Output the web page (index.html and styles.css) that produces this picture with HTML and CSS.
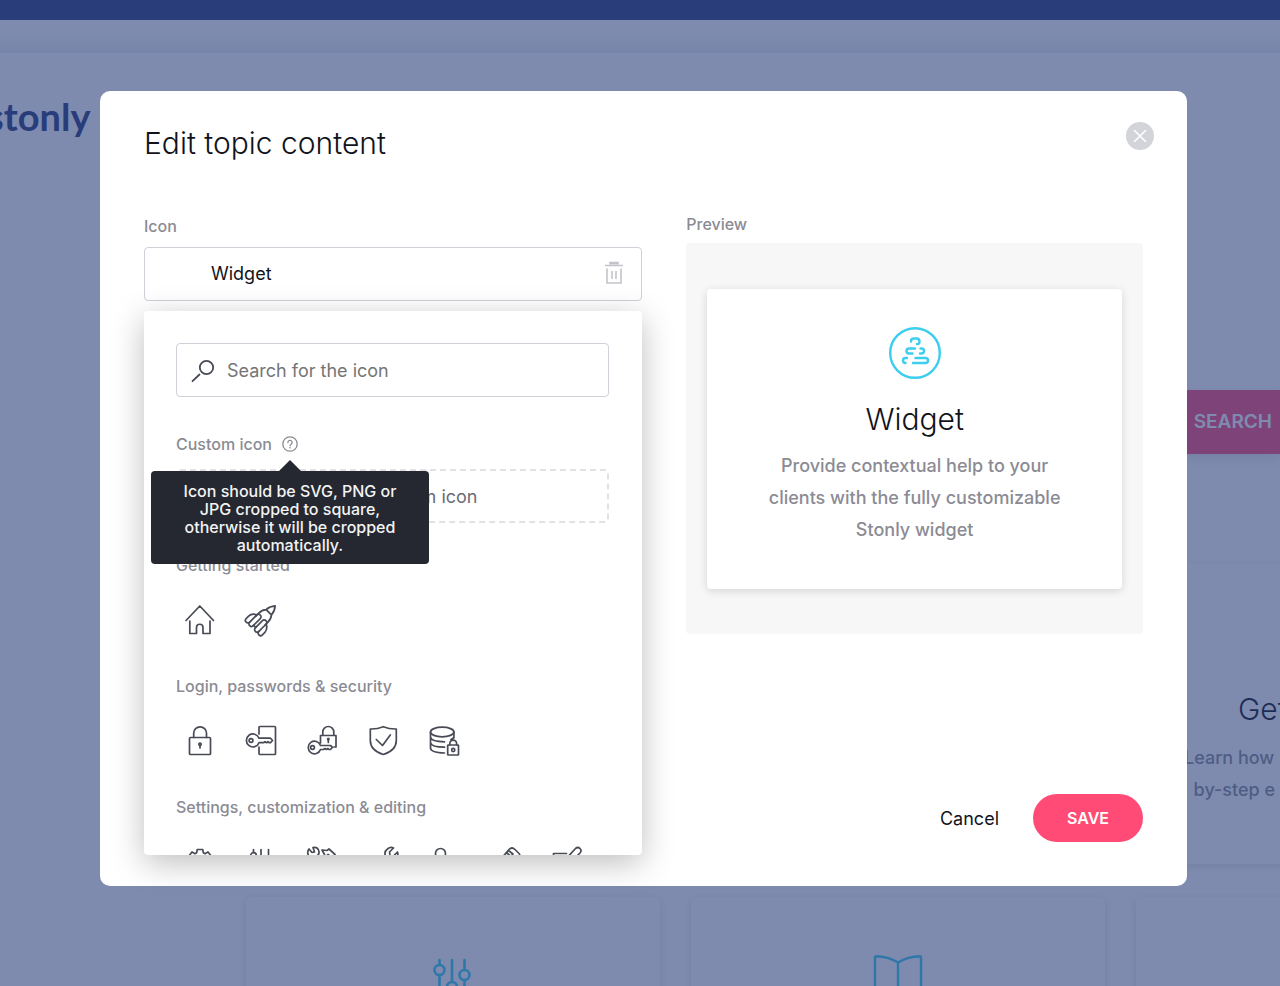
FILE: index.html
```html
<!DOCTYPE html>
<html lang="en">
  <head>
    <meta charset="UTF-8" />
    <meta name="viewport" content="width=device-width, initial-scale=1" />
    <title>Edit topic content</title>
    <link rel="stylesheet" href="styles.css">
  </head>
  <body>
    <!-- Help center page -->
    <div class="page">
      <div class="topbar"></div>
      <div class="subbar"></div>
      <div class="hero">
        <div class="logo">stonly</div>
        <button class="hero-search" type="button">SEARCH</button>
      </div>
      <div class="topics">
        <div class="topic topic-last">
          <h3>Get</h3>
          <p>Learn how<br />&nbsp; by-step e</p>
        </div>
        <div class="topic">
          <svg class="topic-icon" viewBox="0 0 54 54" stroke-width="2.6">
            <circle cx="13.5" cy="11" r="5" />
            <circle cx="26" cy="28" r="5" />
            <circle cx="38.5" cy="16" r="5" />
            <path d="M13.5 1v5M13.5 16v30M26 1v22M26 33v13M38.5 1v10M38.5 21v25" />
          </svg>
        </div>
        <div class="topic">
          <svg class="topic-icon" viewBox="0 0 54 54" stroke-width="2.4">
            <path d="M27 3.500Q17-2.500 5-2.700q-1 0-1 1V41q14 0 23 6 9-6 23-6V-1.700q0-1-1-1Q37-2.500 27 3.500v43" />
          </svg>
        </div>
        <div class="topic"></div>
      </div>
    </div>

    <!-- Modal -->
    <div class="overlay">
      <div class="modal" role="dialog" aria-labelledby="modal-title">
        <div class="modal-header">
          <h1 id="modal-title">Edit topic content</h1>
          <button class="close-btn" type="button" aria-label="Close">
            <svg viewBox="0 0 28 28" stroke-width="1.6"><path d="M8.500 8.500l11 11M19.500 8.500l-11 11" /></svg>
          </button>
        </div>

        <div class="columns">
          <div class="settings">
            <label class="label" for="icon-name">Icon</label>
            <div class="icon-field">
              <input class="text-input" id="icon-name" type="text" value="Widget" />
              <button class="trash-btn" type="button" aria-label="Remove icon">
                <svg viewBox="0 0 20 24" stroke-width="1.6">
                  <path d="M6 3.500V1.500h8v2" fill="currentColor" />
                  <path d="M1 4.500h18M3 7.500V22h14V7.500M8 10v8M12 10v8" />
                </svg>
              </button>

              <div class="picker">
                <div class="search">
                  <svg viewBox="0 0 24 24" stroke-width="1.8"><circle cx="15.500" cy="8.500" r="6.700" /><path d="M8.500 15.500L1.500 22.200" /></svg>
                  <input class="text-input" type="text" placeholder="Search for the icon" aria-label="Search for the icon" />
                </div>

                <div class="custom-label">
                  <span class="label">Custom icon</span>
                  <button class="help-btn" type="button" aria-label="Help" aria-describedby="icon-tip">
                    <svg viewBox="0 0 16 16" stroke-width="1.3">
                      <circle cx="8" cy="8" r="7.200" />
                      <path d="M5.900 6.500a2.100 2.100 0 1 1 3.200 1.700q-1.100.6-1.100 1.500M8 11.500v.4" />
                    </svg>
                  </button>
                  <div class="tooltip" id="icon-tip" role="tooltip">
                    Icon should be SVG, PNG or JPG cropped to square, otherwise it will be cropped automatically.
                  </div>
                </div>
                <button class="upload-btn" type="button">Upload custom icon</button>

                <h2 class="label">Getting started</h2>
                <div class="icons">
                  <button type="button" aria-label="Home">
                    <svg viewBox="0 0 30 30"><path d="M1 15.500L14.800 1l13.700 14.500M4.800 16v12.500H11.500v-6a3.200 3.200 0 0 1 6.500 0v6h7V16" /></svg>
                  </button>
                  <button type="button" aria-label="Rocket">
                    <svg viewBox="0 0 30 30">
                      <g transform="translate(15 15) rotate(45)">
                        <path d="M-3.800-11Q-3.500-16 0-20 3.500-16 3.800-11zM-3.800-11Q-6.500-8-6.500-3V1M3.800-11Q6.500-8 6.500-3V1M-6.500-1Q-11.500 2-11.500 6v3.500q0 2.500 2.500 2.500t2.500-2.500M6.500-1Q11.500 2 11.500 6v3.500q0 2.500-2.500 2.500t-2.500-2.500" />
                        <rect x="-6.500" y="-3" width="5" height="15" rx="2.500" />
                        <rect x="1.500" y="-3" width="5" height="15" rx="2.500" />
                        <path d="M-1.500 9h3" />
                      </g>
                    </svg>
                  </button>
                </div>

                <h2 class="label">Login, passwords &amp; security</h2>
                <div class="icons">
                  <button type="button" aria-label="Lock">
                    <svg viewBox="0 0 30 30">
                      <rect x="4.500" y="11.500" width="21" height="17" rx="1" />
                      <path d="M8.700 11.500V7.200a6.400 6.400 0 0 1 12.800 0v4.300M15 19v3" />
                      <circle cx="15" cy="18.300" r="1.200" />
                    </svg>
                  </button>
                  <button type="button" aria-label="Log in">
                    <svg viewBox="0 0 30 30">
                      <path d="M13 8V1.500q0-1 1-1h14.500q1 0 1 1V27.500q0 1-1 1H14q-1 0-1-1V21M13 12.200h11.500l2 2.300-2 2.200h-1.500l-1-1-1.500 1-1.500-1-1.500 1H13a6.500 6.500 0 1 1 0-4.500" />
                      <circle cx="5" cy="14.500" r="1.900" />
                    </svg>
                  </button>
                  <button type="button" aria-label="Password">
                    <svg viewBox="0 0 30 30">
                      <path d="M13.500 17V9.500h15.500v11.500h-2M15.800 9.500V6a5.500 5.500 0 0 1 11 0v3.500M21.300 13v3.500M13.500 19.500h10l2 1.800-2 2.200h-1.500l-1-1-1.500 1-1.500-1-1.500 1h-3a6.300 6.300 0 1 1 0-4" />
                      <circle cx="5.500" cy="21.500" r="1.900" />
                      <circle cx="21.300" cy="13" r=".7" />
                    </svg>
                  </button>
                  <button type="button" aria-label="Security">
                    <svg viewBox="0 0 30 30"><path d="M15.300.700q6 2.500 13 2.300V14.500q0 10-13 14-13-4-13-14V3Q9.500 3.200 15.300.700zM8.300 13.500l6.200 6L22.300 9" /></svg>
                  </button>
                  <button type="button" aria-label="Data protection">
                    <svg viewBox="0 0 30 30">
                      <ellipse cx="13.200" cy="6" rx="11.700" ry="4.800" />
                      <path d="M1.500 6v16q0 4.500 14 5M24.900 6v6M1.500 11.300q1 4.500 14 4.500M24.900 11q-.5 1.500-3 2.500M1.500 16.700q1 4.500 14 4.500M20.800 19v-1.500a3.400 3.400 0 0 1 6.800 0V19" />
                      <rect x="18.700" y="19" width="10.800" height="10" rx=".5" />
                      <circle cx="24.200" cy="24" r="1.600" />
                    </svg>
                  </button>
                </div>

                <h2 class="label">Settings, customization &amp; editing</h2>
                <div class="icons">
                  <button type="button" aria-label="Settings">
                    <svg viewBox="0 0 30 30"><path d="M5 7.500l2-2.500 3 1.700 1.700-1L12.300 2.500h5.400l.6 3.200 1.700 1L23 5l2 2.500 3 5-2.500 2.500 2.500 3-3 6-3.500-1-2.500 2-.5 3h-6l-.5-3-2.500-2-3.500 1-3-6 2.500-3-2.500-2.500z" /><circle cx="15" cy="15" r="5" /></svg>
                  </button>
                  <button type="button" aria-label="Customization">
                    <svg viewBox="0 0 30 30"><path d="M7.500 2.500v3M15 2.500v14M22.500 2.500v8M7.500 11v17M15 22v6M22.500 16v12" /><circle cx="7.500" cy="8.500" r="2.800" /><circle cx="15" cy="19" r="2.800" /><circle cx="22.500" cy="13" r="2.800" /></svg>
                  </button>
                  <button type="button" aria-label="Tools">
                    <svg viewBox="0 0 30 30"><path d="M2 9.500Q-.5 5 2 2l3 3.500L7.500 5 6 .500q4-1 5.500 2.500T10.500 8.500L27 25l-3 3L7.500 11.500M15 3l5 .5 2-1.500L28 7.500l-3 3-4-3-3.500 3.500V7.500zM13 18l-9 9 2 2 9-9" /></svg>
                  </button>
                  <button type="button" aria-label="Wrench">
                    <svg viewBox="0 0 30 30"><path d="M18.500 11.500Q15 5 19.500 2q3-2.500 6-1L21.500 5l.5 3.500 3.500.5L29.500 5q1.500 6-3 8t-6.500.5L8 26l-4-4z" /></svg>
                  </button>
                  <button type="button" aria-label="User">
                    <svg viewBox="0 0 30 30"><circle cx="11.500" cy="6.500" r="5" /><path d="M1 28q0-13 10.500-13T22 28z" /></svg>
                  </button>
                  <button type="button" aria-label="Edit">
                    <svg viewBox="0 0 30 30"><path d="M2 28l2-8L19 2.500q3-3 6 0l4 4q2 2-1 4L11 27zM14.500 8l3-3.500M18 12l5-5-4-3M21 9.500l-4-3.500" /></svg>
                  </button>
                  <button type="button" aria-label="Write">
                    <svg viewBox="0 0 30 30"><path d="M2.500 6.500h13M2.500 6.500V28h22V15M12 19l2-6L24.500 1.500q2.500-2 4.500 0t0 4.500L18 17z" /></svg>
                  </button>
                </div>
              </div>
            </div>
          </div>

          <div class="preview">
            <div class="label">Preview</div>
            <div class="preview-box">
              <div class="preview-card">
                <svg class="preview-icon" viewBox="0 0 52 52" stroke-width="2.4">
                  <circle cx="26" cy="26" r="24.800" />
                  <path d="M22 14.500q0-3 3-3h2.500q3 0 3 3t-2.500 2.500M26 21.500h-6q-2.500 0-2.500 2.500t2.500 2.500h3.500M31.500 21.500h1q2.500 0 2.500 2.500t-2.500 2.500h-1.500M18 31h-1.500q-2.500 0-2.500 2.500t2.500 2.500M26.500 31h10q2.500 0 2.500 2.500t-2.500 2.500H24" />
                </svg>
                <h3>Widget</h3>
                <p>Provide contextual help to your clients with the fully customizable Stonly widget</p>
              </div>
            </div>
            <div class="actions">
              <button class="cancel-btn" type="button">Cancel</button>
              <button class="save-btn" type="button">SAVE</button>
            </div>
          </div>
        </div>
      </div>
    </div>
  </body>
</html>
```

FILE: styles.css
```css
* {
  box-sizing: border-box;
}

body {
  margin: 0;
  font-family: Inter, "Liberation Sans", sans-serif;
  color: #11131a;
  background: #fff;
}

h1,
h2,
h3,
p {
  margin: 0;
}

button {
  padding: 0;
  border: none;
  background: none;
  font-family: inherit;
  color: inherit;
  cursor: pointer;
}

svg {
  display: block;
  fill: none;
  stroke: currentColor;
  stroke-linecap: round;
  stroke-linejoin: round;
  overflow: visible;
}

/* Page behind the modal */
.page {
  height: 100vh;
  overflow: hidden;
}

.topbar {
  height: 20px;
  background: #283d7a;
}

.subbar {
  height: 33px;
  background: linear-gradient(#fff 40%, #eeeff2);
}

.hero {
  display: flex;
  justify-content: space-between;
  height: 511px;
  padding-top: 37px;
}

.logo {
  margin-left: -13px;
  font-family: Lato, sans-serif;
  font-size: 38px;
  font-weight: 700;
  line-height: 52px;
  color: #283d7a;
}

.hero-search {
  width: 120px;
  height: 64px;
  margin-top: 300px;
  padding: 0 8px 2px 0;
  background: #ff4b75;
  color: #fff;
  font-size: 19px;
  font-weight: 600;
  text-align: right;
  box-shadow: 0 4px 12px rgba(0, 0, 0, 0.1);
}

.topics {
  display: grid;
  grid-template-columns: repeat(3, 414px);
  gap: 33px 31px;
  padding-left: 246px;
}

.topic {
  height: 300px;
  padding-top: 62px;
  border-radius: 5px;
  box-shadow: 0 2px 8px rgba(0, 0, 0, 0.12);
}

.topic-last {
  grid-column: 3;
  padding: 125px 0 0 48px;
}

.topic h3 {
  padding-left: 54px;
  font-size: 30px;
  font-weight: 300;
  line-height: 40px;
}

.topic p {
  margin-top: 13px;
  color: #8b8b94;
  font-size: 18px;
  font-weight: 500;
  line-height: 32px;
}

.topic-icon {
  width: 54px;
  height: 54px;
  margin: 0 auto;
  color: #3bceee;
}

/* Modal */
.overlay {
  position: fixed;
  inset: 0;
  display: flex;
  padding: 91px 93px 100px 100px;
  background: rgba(40, 61, 122, 0.6);
}

.modal {
  flex: 1;
  display: flex;
  flex-direction: column;
  padding: 34px 44px 44px;
  border-radius: 10px;
  background: #fff;
}

.modal-header {
  display: flex;
  justify-content: space-between;
  align-items: flex-start;
}

.modal-header h1 {
  font-size: 30px;
  font-weight: 300;
  line-height: 36px;
}

.close-btn {
  width: 28px;
  height: 28px;
  margin: -3px -11px 0 0;
  border-radius: 50%;
  background: #d3d4da;
  color: #fff;
}

.columns {
  flex: 1;
  display: grid;
  grid-template-columns: 12fr 11fr;
  gap: 44px;
  margin-top: 53px;
}

.settings {
  padding-top: 2px;
}

.label {
  display: block;
  color: #8b8b94;
  font-size: 16px;
  font-weight: 500;
  line-height: 20px;
}

.text-input {
  width: 100%;
  height: 54px;
  border: 1px solid #cfd0d8;
  border-radius: 4px;
  background: #fff;
  color: #11131a;
  font-family: inherit;
  font-size: 18px;
}

.text-input::placeholder {
  color: #757575;
  opacity: 1;
}

.icon-field {
  position: relative;
  margin-top: 11px;
}

.icon-field > .text-input {
  padding: 0 60px 2px 66px;
}

.trash-btn {
  position: absolute;
  top: 14px;
  right: 18px;
  color: #c3c3ca;
}

.trash-btn svg {
  width: 20px;
  height: 24px;
  stroke-linecap: butt;
  stroke-linejoin: miter;
}

/* Icon picker */
.picker {
  position: absolute;
  top: 64px;
  left: 0;
  right: 0;
  height: 544px;
  padding: 32px 33px 0 32px;
  border-radius: 4px;
  background: #fff;
  color: #484b55;
  box-shadow: 0 8px 32px rgba(0, 0, 0, 0.26);
  overflow: hidden;
}

.search {
  position: relative;
}

.search .text-input {
  display: block;
  padding: 0 16px 0 50px;
}

.search svg {
  position: absolute;
  top: 16px;
  left: 15px;
  width: 24px;
  height: 24px;
}

.custom-label {
  position: relative;
  display: flex;
  align-items: center;
  gap: 10px;
  width: max-content;
  margin: 37px 0 15px;
}

.help-btn {
  color: #8b8b94;
}

.help-btn svg {
  width: 16px;
  height: 16px;
}

.tooltip {
  position: absolute;
  z-index: 1;
  top: 37px;
  right: -131px;
  width: 278px;
  padding: 11px 24px 10px;
  border-radius: 4px;
  background: #252830;
  color: #f3f3f3;
  font-size: 16px;
  font-weight: 500;
  line-height: 18px;
  text-align: center;
}

.tooltip::before {
  content: "";
  position: absolute;
  bottom: 100%;
  left: 50%;
  margin-left: -11px;
  border: 11px solid transparent;
  border-top: 0;
  border-bottom-color: #252830;
}

.upload-btn {
  width: 100%;
  height: 54px;
  margin-bottom: 32px;
  border: 2px dashed #e2e2e6;
  border-radius: 4px;
  color: #6a6c74;
  font-size: 18px;
}

.icons {
  display: flex;
  gap: 31px;
  margin: 30px 0 41px 9px;
}

.icons svg {
  width: 30px;
  height: 30px;
  stroke-width: 1.7;
}

/* Preview */
.preview {
  display: flex;
  flex-direction: column;
}

.preview-box {
  margin-top: 9px;
  padding: 46px 21px 45px;
  border-radius: 4px;
  background: #f7f7f7;
}

.preview-card {
  padding: 38px 48px 43px;
  border-radius: 4px;
  background: #fff;
  text-align: center;
  box-shadow: 0 2px 8px rgba(0, 0, 0, 0.14);
}

.preview-icon {
  width: 52px;
  height: 52px;
  margin: 0 auto 20px;
  color: #3bceee;
}

.preview-card h3 {
  font-size: 30px;
  font-weight: 300;
  line-height: 40px;
}

.preview-card p {
  margin-top: 11px;
  color: #8b8b94;
  font-size: 18px;
  font-weight: 500;
  line-height: 32px;
}

.actions {
  display: flex;
  justify-content: flex-end;
  align-items: center;
  gap: 34px;
  margin-top: auto;
}

.cancel-btn {
  font-size: 18px;
}

.save-btn {
  width: 110px;
  height: 48px;
  border-radius: 24px;
  background: #ff4b75;
  color: #fff;
  font-size: 16px;
  font-weight: 600;
}
```
